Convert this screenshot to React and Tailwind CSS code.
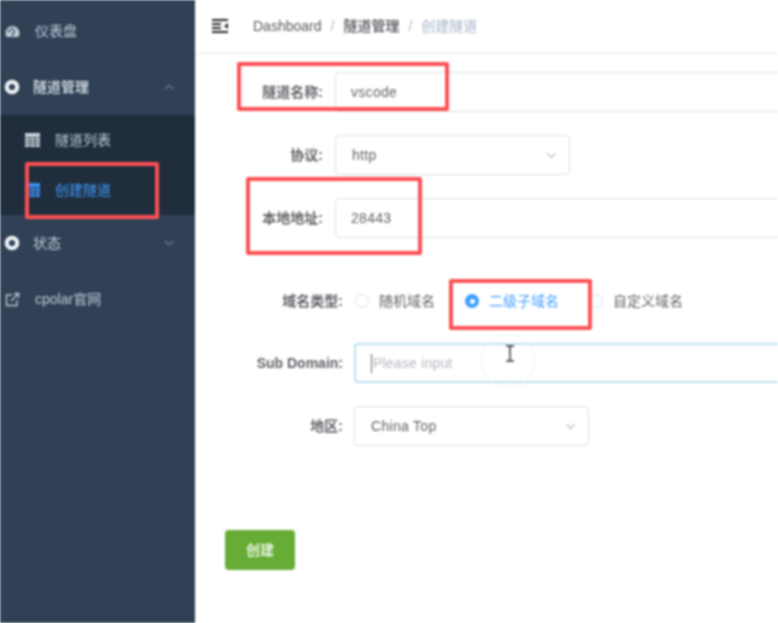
import React from "react";
import { ChevronDown, ChevronUp } from "lucide-react";

const FONT = "font-['Liberation_Sans','Noto_Sans_CJK_SC',sans-serif]";

function RingIcon() {
  return (
    <svg width="16" height="16" viewBox="0 0 16 16" className="shrink-0">
      <circle cx="8" cy="8" r="5.2" fill="none" stroke="#eef2f5" strokeWidth="4.2" />
      <circle cx="8" cy="8" r="2" fill="#304156" />
    </svg>
  );
}

function GaugeIcon() {
  return (
    <svg width="15" height="13" viewBox="0 0 15 13" className="shrink-0">
      <path d="M7.5 1a7 7 0 0 0-7 7c0 1.600.5 3 1.300 4h11.400c.8-1 1.300-2.400 1.300-4a7 7 0 0 0-7-7z" fill="#c3cad3" />
      <circle cx="4" cy="6" r="1.200" fill="#304156" />
      <circle cx="7" cy="4" r="1.200" fill="#304156" />
      <path d="M7 11l3-6" stroke="#304156" strokeWidth="1.400" />
    </svg>
  );
}

function TableIcon({ color, line }) {
  return (
    <svg width="15" height="14" viewBox="0 0 15 14" className="shrink-0">
      <rect width="15" height="14" fill={color} />
      <path d="M0 4.500h15M0 8h15M0 11h15M5 4v10M10 4v10" stroke={line} strokeWidth="0.800" />
    </svg>
  );
}

function LinkIcon() {
  return (
    <svg width="15" height="15" viewBox="0 0 15 15" fill="none" stroke="#bfc7d1" strokeWidth="1.400" className="shrink-0">
      <path d="M7 3H1.500v10.500H12V8" />
      <path d="M6 9l7-7M9 1.500h4.500V6" />
    </svg>
  );
}

function FoldIcon() {
  return (
    <svg width="16" height="14" viewBox="0 0 16 14" className="shrink-0">
      <path d="M0 1h16M0 5h9M0 9h9M0 13h16" stroke="#23262b" strokeWidth="2" />
      <path d="M16 4v6l-4-3z" fill="#23262b" />
    </svg>
  );
}

function MenuItem({ icon, label, arrow, labelClass = "text-[#bfcbd9]", gap = "gap-[8px]" }) {
  return (
    <div className={`flex h-[56px] items-center pl-[4px] pr-[18px] text-[14px] ${gap} ${labelClass}`}>
      <span className="flex w-[16px] justify-center">{icon}</span>
      <span className="ml-[5px]">{label}</span>
      {arrow && <span className="ml-auto text-[#66788e]">{arrow}</span>}
    </div>
  );
}

function SubItem({ color, line, label, labelClass }) {
  return (
    <div className={`flex h-[50px] items-center gap-[15px] pl-[25px] text-[14px] ${labelClass}`}>
      <TableIcon color={color} line={line} />
      <span>{label}</span>
    </div>
  );
}

function Sidebar() {
  return (
    <aside className="flex w-[195px] shrink-0 flex-col bg-[#304156] pt-[3px]">
      <MenuItem icon={<GaugeIcon />} label="仪表盘" gap="gap-[10px]" />
      <MenuItem
        icon={<RingIcon />}
        label="隧道管理"
        labelClass="font-medium text-[#e4e9ef]"
        arrow={<ChevronUp size={16} />}
      />
      <div className="bg-[#1f2d3d]">
        <SubItem color="#c9d0d8" line="#1f2d3d" label="隧道列表" labelClass="text-[#bfcbd9]" />
        <SubItem color="#3d8ff0" line="#1f2d3d" label="创建隧道" labelClass="text-[#409eff]" />
      </div>
      <MenuItem icon={<RingIcon />} label="状态" arrow={<ChevronDown size={16} />} />
      <MenuItem icon={<LinkIcon />} label="cpolar官网" gap="gap-[10px]" />
    </aside>
  );
}

function Header() {
  return (
    <header className="flex h-[52px] shrink-0 items-center gap-[25px] pl-[17px] text-[14px] shadow-[0_1px_3px_rgba(0,21,41,0.08)]">
      <FoldIcon />
      <div className="flex items-center gap-[9px]">
        <span className="text-[#55585c]">Dashboard</span>
        <span className="text-[#b4b8bf]">/</span>
        <span className="font-medium text-[#4a4e55]">隧道管理</span>
        <span className="text-[#b4b8bf]">/</span>
        <span className="text-[#a3b2c8]">创建隧道</span>
      </div>
    </header>
  );
}

function Row({ label, labelWidth = "w-[128px]", gap = "gap-[12px]", children }) {
  return (
    <div className={`flex h-[40px] items-center ${gap}`}>
      <label className={`shrink-0 text-right text-[14px] font-semibold text-[#606266] ${labelWidth}`}>{label}</label>
      {children}
    </div>
  );
}

function TextBox({ value }) {
  return (
    <div className="flex h-[40px] w-[600px] shrink-0 items-center rounded-[4px] border border-[#dcdfe6] px-[15px] text-[14px] tracking-[0.3px] text-[#606266]">
      {value}
    </div>
  );
}

function SelectBox({ value, width }) {
  return (
    <div className={`flex h-[40px] items-center justify-between rounded-[4px] border border-[#dcdfe6] pl-[16px] pr-[10px] text-[14px] tracking-[0.3px] text-[#606266] ${width}`}>
      <span>{value}</span>
      <ChevronDown size={15} className="text-[#b4b8bf]" />
    </div>
  );
}

function Radio({ label, checked }) {
  return (
    <div className={`flex items-center gap-[10px] text-[14px] ${checked ? "text-[#409eff]" : "text-[#606266]"}`}>
      {checked ? (
        <span className="flex h-[14px] w-[14px] items-center justify-center rounded-full bg-[#409eff]">
          <span className="h-[5px] w-[5px] rounded-full bg-white" />
        </span>
      ) : (
        <span className="h-[14px] w-[14px] rounded-full border border-[#dcdfe6]" />
      )}
      <span>{label}</span>
    </div>
  );
}

function Form() {
  return (
    <div className="flex flex-col pt-[20px]">
      <div className="flex flex-col gap-[23px]">
        <Row label="隧道名称:">
          <TextBox value="vscode" />
        </Row>
        <Row label="协议:">
          <SelectBox value="http" width="w-[235px]" />
        </Row>
        <Row label="本地地址:">
          <TextBox value="28443" />
        </Row>
      </div>
      <div className="mt-[43px] flex flex-col gap-[22px]">
        <Row label="域名类型:" labelWidth="w-[148px]">
          <div className="flex items-center gap-[30px]">
            <Radio label="随机域名" />
            <Radio label="二级子域名" checked />
            <Radio label="自定义域名" />
          </div>
        </Row>
        <Row label="Sub Domain:" labelWidth="w-[148px]" gap="gap-[11px]">
          <div className="flex h-[40px] w-[600px] shrink-0 items-center rounded-[4px] border-2 border-[#bfe0f0] px-[15px] text-[14px] tracking-[0.2px] text-[#b4b8bf]">
            <span className="mr-[1px] h-[19px] w-px bg-[#606266]" />
            Please input
          </div>
        </Row>
      </div>
      <div className="mt-[23px]">
        <Row label="地区:" labelWidth="w-[148px]" gap="gap-[11px]">
          <SelectBox value="China Top" width="w-[235px]" />
        </Row>
      </div>
      <button className="ml-[30px] mt-[84px] h-[40px] w-[70px] rounded-[4px] bg-[#67ac34] text-[14px] font-medium text-white">
        创建
      </button>
    </div>
  );
}

function Callout({ className }) {
  return <div className={`absolute rounded-[2px] border-[4px] border-[#fc5053] ${className}`} />;
}

export default function App() {
  return (
    <div className={`relative flex h-[623px] w-[778px] overflow-hidden bg-white blur-[0.8px] ${FONT}`}>
      <Sidebar />
      <main className="flex min-w-0 flex-1 flex-col overflow-hidden">
        <Header />
        <Form />
      </main>

      <Callout className="left-[237px] top-[62px] h-[49px] w-[212px]" />
      <Callout className="left-[246px] top-[177px] h-[78px] w-[176px]" />
      <Callout className="left-[449px] top-[279px] h-[51px] w-[143px]" />
      <Callout className="left-[25px] top-[162px] h-[57px] w-[134px]" />

      {/* mouse pointer with its faint highlight */}
      <div className="absolute left-[481px] top-[334px] h-[54px] w-[54px] rounded-full border border-[#f6f3f3]" />
      <svg width="8" height="17" viewBox="0 0 8 17" className="absolute left-[506px] top-[345px]">
        <path d="M0 1h8M0 16h8M4 1v15" stroke="#33373d" strokeWidth="1.500" />
      </svg>
    </div>
  );
}
